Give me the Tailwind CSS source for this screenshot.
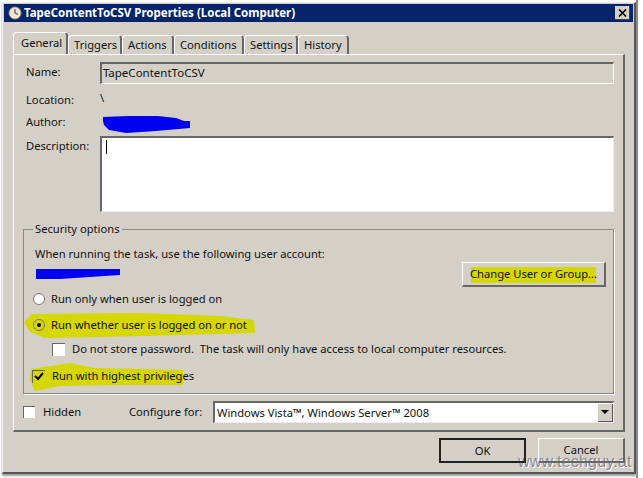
<!DOCTYPE html>
<html><head><meta charset="utf-8"><script src="https://cdn.jsdelivr.net/npm/@tailwindcss/browser@4"></script></head>
<body class="bg-white overflow-hidden">
<div class="relative w-[643px] h-[478px] overflow-hidden font-['Noto_Sans',sans-serif] text-[11.2px] leading-[16px] text-[#111]">
  <div class="absolute left-[636px] top-0 w-[2px] h-[478px] bg-[#888]"></div>
  <div class="relative ml-[2px] mt-[2px] w-[634px] h-[472px] bg-[#d4d0c8] border-r-2 border-b-2 border-[#555] border-t border-l border-t-[#eee] border-l-[#eee] p-px flex flex-col shadow-[0_2px_2px_#999]">
    <svg class="absolute left-[-3px] top-[-3px] z-0" width="643" height="478">
      <path d="M471 267h125v16H471z" fill="#d6d600"/>
      <path d="M24 322l8-8 108-1 80 3 34 4 1 13-75 2-80 2-55 1-15-6z" fill="#d6d600"/>
      <path d="M31 369l39-6 25 5 88 2v15l-63 0-60 1-25 5-5-11z" fill="#d6d600"/>
    </svg>
    <div class="relative z-10 h-[18px] bg-[#06246a] flex items-center pl-[4px] pr-[3px] text-white font-bold text-[11.5px]">
      <svg width="14" height="14" viewBox="0 0 14 14" class="mr-[2px]"><circle cx="7" cy="7" r="6" fill="#efe6cf" stroke="#a89878"/><path d="M7 3v4l3 1.5" fill="none" stroke="#555" stroke-width="1.2"/></svg>
      <span>TapeContentToCSV Properties (Local Computer)</span>
      <div class="ml-auto w-[15px] h-[14px] bg-[#d4d0c8] border-r border-b border-[#444] flex items-center justify-center">
        <svg width="9" height="8" viewBox="0 0 9 8"><path d="M1 0.5l7 7M8 0.5l-7 7" stroke="#000" stroke-width="1.6"/></svg>
      </div>
    </div>
    <div class="relative z-10 flex pl-[9px] mt-[10px] h-[22px] items-end">
      <div class="w-[55px] h-[22px] bg-[#d4d0c8] border-t border-l border-white border-r-2 border-r-[#666] rounded-t-sm pl-[7px] pt-[2px]">General</div>
      <div class="w-[54px] h-[19px] border-t border-l border-white border-r-2 border-r-[#666] rounded-t-sm pl-[5px] pt-[1px]">Triggers</div>
      <div class="w-[52px] h-[19px] border-t border-l border-white border-r-2 border-r-[#666] rounded-t-sm pl-[5px] pt-[1px]">Actions</div>
      <div class="w-[70px] h-[19px] border-t border-l border-white border-r-2 border-r-[#666] rounded-t-sm pl-[5px] pt-[1px]">Conditions</div>
      <div class="w-[54px] h-[19px] border-t border-l border-white border-r-2 border-r-[#666] rounded-t-sm pl-[5px] pt-[1px]">Settings</div>
      <div class="w-[51px] h-[19px] border-t border-l border-white border-r-2 border-r-[#666] rounded-t-sm pl-[5px] pt-[1px]">History</div>
    </div>
    <div class="relative z-10 ml-[9px] w-[612px] h-[378px] border-l border-t border-white border-r-2 border-b-2 border-r-[#666] border-b-[#666] px-[9px] pt-[7px]">
      <div class="flex items-center h-[22px]">
        <span class="w-[77px] pl-[3px] -mt-[2px]">Name:</span>
        <div class="w-[515px] h-[22px] border-t-2 border-l-2 border-[#666] border-r border-b border-r-white border-b-white pl-[1px] leading-[18px] text-[11.5px]">TapeContentToCSV</div>
      </div>
      <div class="flex h-[16px] mt-[8px]"><span class="w-[77px] pl-[3px]">Location:</span><span class="-mt-[2px]">\</span></div>
      <div class="flex h-[16px] mt-[6px]"><span class="w-[77px] pl-[3px]">Author:</span></div>
      <div class="flex mt-[6px] h-[76px]">
        <span class="w-[77px] pl-[3px] pt-[2px]">Description:</span>
        <div class="w-[515px] h-[76px] bg-white border-t-2 border-l-2 border-[#666] border-r border-b border-r-[#eee] border-b-[#eee] pl-[4px] pt-[2px]"><div class="w-px h-[14px] bg-black"></div></div>
      </div>
      <div class="relative mt-[17px] w-[591px] h-[165px] border border-[#888] shadow-[1px_1px_0_#fff] pl-[11px]">
        <span class="absolute left-[9px] -top-[9px] bg-[#d4d0c8] px-[2px]">Security options</span>
        <div class="pt-[16px] h-[32px]">When running the task, use the following user account:</div>
        <div class="h-[20px]"></div>
        <div class="absolute right-[7px] top-[32px] w-[144px] h-[25px] border border-white border-r-2 border-b-2 border-r-[#666] border-b-[#666] flex items-center justify-center">Change User or Group...</div>
        <div class="flex items-center h-[16px] -ml-[2px] mt-[9px]">
          <span class="w-[12px] h-[12px] rounded-full bg-white border border-[#777] mr-[6px]"></span>Run only when user is logged on</div>
        <div class="flex items-center h-[16px] -ml-[2px] mt-[10px]">
          <span class="w-[12px] h-[12px] rounded-full bg-[#d6d600] border border-[#777] mr-[6px] flex items-center justify-center"><span class="w-[4px] h-[4px] rounded-full bg-black"></span></span>Run whether user is logged on or not</div>
        <div class="flex items-center h-[16px] ml-[17px] mt-[8px]">
          <span class="w-[13px] h-[13px] bg-white border-t border-l border-[#666] mr-[7px]"></span>Do not store password.&nbsp; The task will only have access to local computer resources.</div>
        <div class="flex items-center h-[16px] -ml-[3px] mt-[11px]">
          <span class="w-[13px] h-[13px] bg-[#d6d600] border-t border-l border-[#666] mr-[7px] flex items-center justify-center"><svg width="10" height="9" viewBox="0 0 10 9"><path d="M1 4l3 3 5-6" fill="none" stroke="#000" stroke-width="2"/></svg></span>Run with highest privileges</div>
      </div>
      <div class="flex items-center mt-[7px] h-[22px]">
        <span class="w-[12px] h-[12px] bg-white border-t border-l border-[#666] mr-[8px]"></span>
        <span class="w-[86px]">Hidden</span>
        <span class="w-[84px]">Configure for:</span>
        <div class="w-[401px] h-[22px] bg-white border-t-2 border-l-2 border-[#666] border-r border-b border-r-[#eee] border-b-[#eee] pl-[2px] flex items-center">
          <span>Windows Vista™, Windows Server™ 2008</span>
          <div class="ml-auto w-[15px] h-[18px] bg-[#d4d0c8] border-r border-b border-[#555] flex items-center justify-center"><svg width="8" height="4" viewBox="0 0 8 4"><path d="M0 0h8L4 4z" fill="#000"/></svg></div>
        </div>
      </div>
    </div>
    <div class="relative z-10 flex justify-end gap-[12px] pr-[8px] mt-[6px]">
      <div class="w-[87px] h-[25px] border-2 border-[#222] flex items-center justify-center">OK</div>
      <div class="w-[87px] h-[25px] border border-white border-r-2 border-b-2 border-r-[#666] border-b-[#666] flex items-center justify-center">Cancel</div>
    </div>
  </div>
  <svg class="absolute left-0 top-0 pointer-events-none" width="643" height="478">
    <path d="M103 117l25-1 30 0 18 2 8 3 6 0 0 7-34 3-30 2-17-3-5-5-1-4z" fill="#0000f0"/>
    <path d="M36 269h50l34 0 0 6-30 2-30 2-24 0z" fill="#0000f0"/>
  </svg>
  <div class="absolute left-[518px] top-[454px] font-['Liberation_Sans',sans-serif] text-[16px] tracking-[0.2px] text-[#8a8a9a] [text-shadow:1px_1px_0_#fff]">www.techguy.at</div>
</div>
</body></html>
